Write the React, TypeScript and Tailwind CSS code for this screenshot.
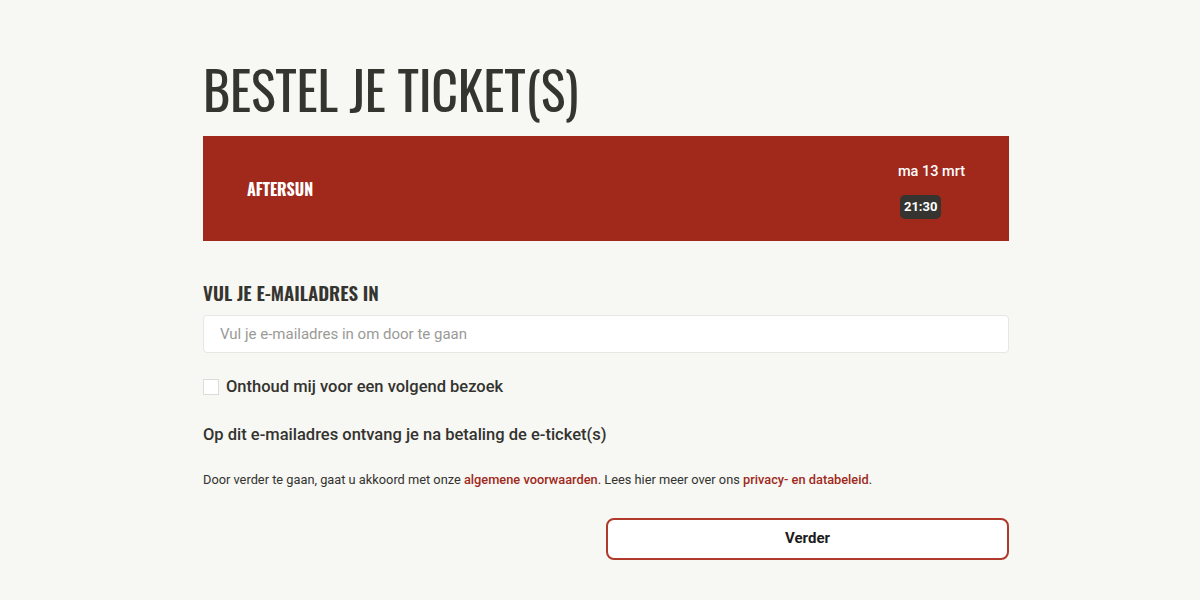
import { useState } from "react";

const heading = "font-['Oswald','DejaVu_Sans_Condensed','Liberation_Sans_Narrow',sans-serif]";

export default function App() {
  const [email, setEmail] = useState("");
  const [remember, setRemember] = useState(false);

  return (
    <div className="min-h-[600px] w-full bg-[#f7f7f3] font-['Roboto',sans-serif] text-[#333330]">
      <div className="ml-[203px] w-[806px] pt-[56px]">
        <h1 className={`${heading} text-[52px] leading-[66px] font-normal tracking-[-0.25px] text-[#353530]`}>
          BESTEL JE TICKET(S)
        </h1>

        {/* event banner */}
        <div className="mt-[14px] flex h-[105px] items-center justify-between bg-[#a0291b] pl-[44px] pr-[44px] text-white">
          <span className={`${heading} text-[16px] font-bold`}>AFTERSUN</span>
          <div className="flex flex-col items-start gap-[12px] pt-[3px]">
            <span className="text-[14.5px] font-medium">ma 13 mrt</span>
            <span className="ml-[2px] rounded-[5px] bg-[#363430] px-[4px] py-[3px] text-[13px] font-bold leading-[18px]">
              21:30
            </span>
          </div>
        </div>

        <h2 className={`${heading} mt-[38px] text-[19px] font-semibold leading-[26px] text-[#35342f]`}>
          VUL JE E-MAILADRES IN
        </h2>

        <input
          type="email"
          value={email}
          onChange={(e) => setEmail(e.target.value)}
          placeholder="Vul je e-mailadres in om door te gaan"
          className="mt-[10px] block h-[38px] w-full rounded-[4px] border border-[#e6e6e2] bg-white px-[16px] text-[15px] outline-none placeholder:text-[#9a9a96]"
        />

        <label className="mt-[22px] flex items-center gap-[7px]">
          <input
            type="checkbox"
            checked={remember}
            onChange={(e) => setRemember(e.target.checked)}
            className="h-[16px] w-[16px] appearance-none border border-[#dcdcd8] bg-white"
          />
          <span className="text-[16.5px] font-medium">Onthoud mij voor een volgend bezoek</span>
        </label>

        <p className="mt-[23px] text-[16.5px] font-medium">
          Op dit e-mailadres ontvang je na betaling de e-ticket(s)
        </p>

        <p className="mt-[22px] text-[12.8px] text-[#333330]">
          Door verder te gaan, gaat u akkoord met onze{" "}
          <a className="font-medium text-[#a0291b]">algemene voorwaarden</a>. Lees hier meer over ons{" "}
          <a className="font-medium text-[#a0291b]">privacy- en databeleid</a>.
        </p>

        <div className="mt-[29px] flex justify-end">
          <button className="h-[42px] w-[403px] rounded-[8px] border-2 border-[#b0392a] bg-white text-[15px] font-bold text-[#1c1c1c]">
            Verder
          </button>
        </div>
      </div>
    </div>
  );
}
